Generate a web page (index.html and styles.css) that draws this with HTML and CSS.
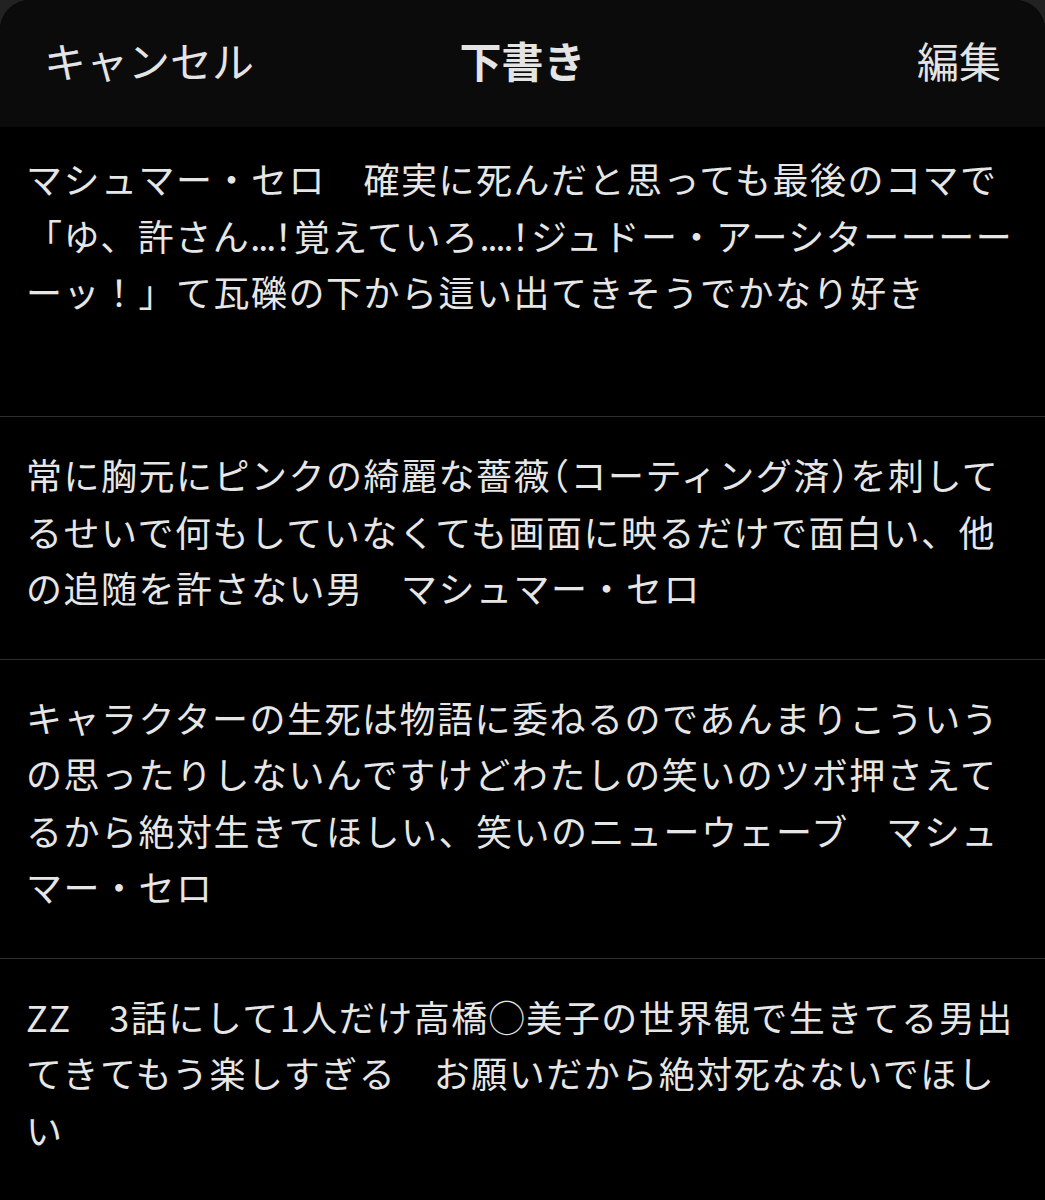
FILE: index.html
```html
<!DOCTYPE html>
<html lang="ja">
<head>
<meta charset="utf-8">
<title>下書き</title>
<link rel="stylesheet" href="styles.css">
</head>
<body>
<div class="sheet">
  <header class="nav">
    <span class="nav-btn nav-left">キャンセル</span>
    <span class="nav-title">下書き</span>
    <span class="nav-btn nav-right">編集</span>
  </header>
  <ul class="drafts">
    <li class="draft draft-first">マシュマー・セロ　確実に死んだと思っても最後のコマで<br>「ゆ、許さん<span class="dots">...</span><span class="punct">！</span>覚えていろ<span class="dots">....</span><span class="punct">！</span>ジュドー・アーシターーーー<br>ーッ！」て瓦礫の下から這い出てきそうでかなり好き</li>
    <li class="draft">常に胸元にピンクの綺麗な薔薇<span class="punct">（</span>コーティング済<span class="punct">）</span>を刺して<br>るせいで何もしていなくても画面に映るだけで面白い、他<br>の追随を許さない男　マシュマー・セロ</li>
    <li class="draft">キャラクターの生死は物語に委ねるのであんまりこういう<br>の思ったりしないんですけどわたしの笑いのツボ押さえて<br>るから絶対生きてほしい、笑いのニューウェーブ　マシュ<br>マー・セロ</li>
    <li class="draft">ZZ　3話にして1人だけ高橋◯美子の世界観で生きてる男出<br>てきてもう楽しすぎる　お願いだから絶対死なないでほし<br>い</li>
  </ul>
</div>
</body>
</html>
```

FILE: styles.css
```css
html, body {
  margin: 0;
  padding: 0;
  background: #222222;
}

body {
  font-family: "Noto Sans CJK JP", "Noto Sans", sans-serif;
  color: #e6e6e6;
}

.sheet {
  background: #000;
  border-top-left-radius: 30px;
  border-top-right-radius: 30px;
  overflow: hidden;
  min-height: 1200px;
}

.nav {
  height: 127px;
  background: #0b0b0b;
  display: grid;
  grid-template-columns: 1fr auto 1fr;
  align-items: center;
  padding: 0 44px 8px 44px;
  box-sizing: border-box;
  font-size: 42px;
  color: #e4e4e4;
}

.nav-left {
  justify-self: start;
}

.nav-title {
  font-weight: 700;
  justify-self: center;
}

.nav-right {
  justify-self: end;
}

.drafts {
  list-style: none;
  margin: 0;
  padding: 0;
}

.draft {
  font-size: 36px;
  line-height: 56.5px;
  letter-spacing: 1.5px;
  padding: 29px 0 43px 26px;
  border-bottom: 1px solid #2e2e2e;
  white-space: nowrap;
}

.draft-first {
  padding-top: 23px;
  min-height: 223px;
}

.dots {
  letter-spacing: -2px;
}

.punct {
  font-feature-settings: "halt" 1;
}
```
